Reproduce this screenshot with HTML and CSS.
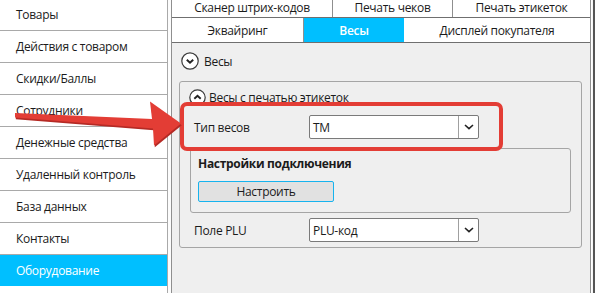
FILE: index.html
```html
<!DOCTYPE html>
<html lang="ru">
<head>
<meta charset="utf-8">
<link rel="stylesheet" href="styles.css">
</head>
<body>
<div class="app">
  <nav class="sidebar">
    <div class="item first">Товары</div>
    <div class="item">Действия с товаром</div>
    <div class="item">Скидки/Баллы</div>
    <div class="item">Сотрудники</div>
    <div class="item">Денежные средства</div>
    <div class="item">Удаленный контроль</div>
    <div class="item">База данных</div>
    <div class="item">Контакты</div>
    <div class="item active">Оборудование</div>
  </nav>
  <div class="gap"></div>
  <main class="main">
    <div class="tabrow row1">
      <div class="tab t-scan">Сканер штрих-кодов</div>
      <div class="tab t-check">Печать чеков</div>
      <div class="tab t-label">Печать этикеток</div>
    </div>
    <div class="tabrow row2">
      <div class="tab t-acq">Эквайринг</div>
      <div class="tab t-scale active">Весы</div>
      <div class="tab t-disp">Дисплей покупателя</div>
    </div>
    <div class="panel">
      <div class="expander">
        <svg class="circ big" viewBox="0 0 18 18"><circle cx="9" cy="9" r="8.2" fill="#fff" stroke="#3a3a3a" stroke-width="1.2"/><polyline points="5.8,7.8 9,10.8 12.2,7.8" fill="none" stroke="#222" stroke-width="1.9"/></svg>
        <span>Весы</span>
      </div>
      <div class="group">
        <div class="group-head">
          <svg class="circ small" viewBox="0 0 17 17"><circle cx="8.5" cy="8.5" r="7.7" fill="#fff" stroke="#3a3a3a" stroke-width="1.2"/><polyline points="5.3,9.8 8.5,6.8 11.7,9.8" fill="none" stroke="#222" stroke-width="1.9"/></svg>
          <span>Весы с печатью этикеток</span>
        </div>
        <div class="field type-row">
          <span class="label">Тип весов</span>
          <div class="combo"><span class="val">ТМ</span><span class="drop"><svg viewBox="0 0 10 6"><polyline points="1,1 5,4.6 9,1" fill="none" stroke="#222" stroke-width="1.6"/></svg></span></div>
        </div>
        <div class="subgroup">
          <div class="sub-title">Настройки подключения</div>
          <button class="btn">Настроить</button>
        </div>
        <div class="field plu-row">
          <span class="label">Поле PLU</span>
          <div class="combo"><span class="val">PLU-код</span><span class="drop"><svg viewBox="0 0 10 6"><polyline points="1,1 5,4.6 9,1" fill="none" stroke="#222" stroke-width="1.6"/></svg></span></div>
        </div>
      </div>
    </div>
  </main>
  <div class="frame"></div>
</div>
<div class="highlight"></div>
<svg class="arrow" width="595" height="293" viewBox="0 0 595 293">
  <polygon points="15,113.5 152,119.5 150,102 181,124 154,146 153,129 15,118" fill="#b52a25" transform="translate(0.8,1.2)"/>
  <polygon points="15,113 152,119 150,101.5 181,123.5 154,145.5 153,128.5 15,117.5" fill="#e33d35"/>
</svg>
</body>
</html>
```

FILE: styles.css
```css
* { box-sizing: border-box; }
html, body {
  margin: 0;
  padding: 0;
  width: 595px;
  height: 293px;
  overflow: hidden;
  background: #fff;
  font-family: "Open Sans", "Noto Sans", sans-serif;
  font-size: 12px;
  letter-spacing: -0.3px;
  color: #1b1b1b;
}
.app {
  display: flex;
  height: 293px;
  position: relative;
}
.sidebar {
  width: 168px;
  flex: none;
  border-right: 1px solid #a9a9a9;
  background: #fff;
  margin-top: -1px;
}
.item {
  height: 32px;
  border-bottom: 1px solid #a9a9a9;
  padding-left: 16px;
  display: flex;
  align-items: center;
}
.item.active {
  background: #00bfff;
  color: #fff;
  border-bottom: none;
  height: 31px;
}
.gap {
  width: 3px;
  flex: none;
  background: #fcfcfc;
}
.main {
  width: 420px;
  flex: none;
  display: flex;
  flex-direction: column;
  border-left: 1px solid #8f8f8f;
  border-right: 1px solid #8f8f8f;
}
.tabrow {
  display: flex;
  border-bottom: 1px solid #6f6f6f;
  background: #fff;
}
.row1 { height: 18px; }
.row2 { height: 25px; }
.tab {
  display: flex;
  align-items: center;
  justify-content: center;
  border-right: 1px solid #8f8f8f;
}
.row1 .tab { padding-bottom: 2px; }
.tab:last-child { border-right: none; }
.t-scan { width: 161px; }
.t-check { width: 120px; }
.t-label { flex: 1; }
.t-acq { width: 132px; }
.t-scale { width: 100px; }
.t-disp { flex: 1; }
.tab.active {
  background: #00bfff;
  color: #fff;
  font-weight: 600;
  border-right: none;
}
.panel {
  flex: 1;
  background: #efefef;
  padding: 9px 7px 0 7px;
}
.expander {
  display: flex;
  align-items: center;
  height: 18px;
  padding-left: 2px;
  gap: 5px;
}
.circ.big { width: 18px; height: 18px; }
.circ.small { width: 17px; height: 17px; }
.group {
  margin-top: 11px;
  margin-right: 1px;
  border: 1px solid #a5a5a5;
  border-radius: 3px;
  height: 167px;
  padding: 7px 9px 0 9px;
}
.group-head {
  display: flex;
  align-items: center;
  gap: 3px;
  height: 17px;
}
.field {
  display: flex;
  align-items: center;
  height: 24px;
  padding-left: 5px;
}
.type-row { margin-top: 9px; }
.label {
  width: 115px;
}
.combo {
  width: 170px;
  height: 24px;
  background: #fff;
  border: 1px solid #7a7a7a;
  border-radius: 2px;
  display: flex;
  align-items: center;
}
.val {
  flex: 1;
  padding-left: 3px;
}
.drop {
  width: 20px;
  height: 100%;
  border-left: 1px solid #a0a0a0;
  display: flex;
  align-items: center;
  justify-content: center;
}
.drop svg { width: 10px; height: 6px; }
.subgroup {
  margin-top: 9px;
  margin-left: 1px;
  margin-right: 1px;
  border: 1px solid #a5a5a5;
  border-radius: 3px;
  height: 65px;
  padding: 6px 0 0 7px;
}
.sub-title {
  font-weight: 700;
  height: 18px;
  line-height: 18px;
}
.btn {
  margin-top: 8px;
  width: 136px;
  height: 21px;
  background: #e1e1e1;
  border: 1px solid #16b3ee;
  border-radius: 2px;
  font-family: inherit;
  font-size: 12px;
  letter-spacing: -0.3px;
  color: #1b1b1b;
  padding: 0;
}
.plu-row { margin-top: 5px; }
.frame {
  flex: 1;
  background: #f6f6f6;
  border-right: 2px solid #555;
  margin-left: 1px;
}
.highlight {
  position: absolute;
  left: 180px;
  top: 102px;
  width: 323px;
  height: 49px;
  border: 4px solid #e33d35;
  border-radius: 7px;
}
.arrow {
  position: absolute;
  left: 0;
  top: 0;
}
```
